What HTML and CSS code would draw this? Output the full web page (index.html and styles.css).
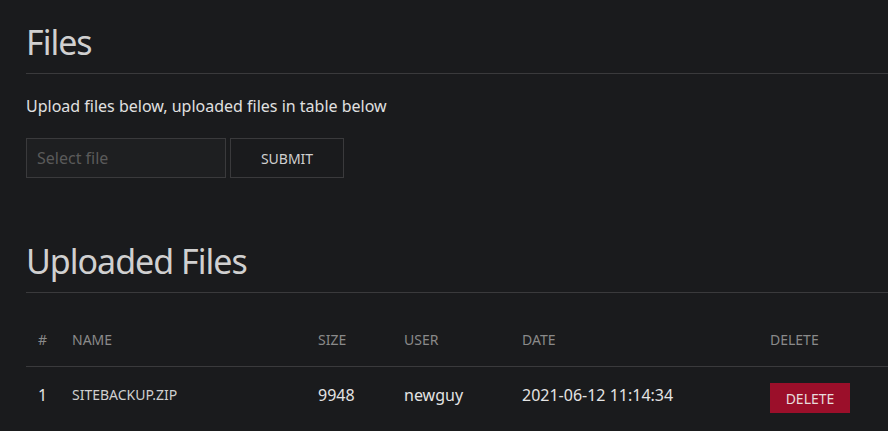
FILE: index.html
```html
<!DOCTYPE html>
<html>
<head>
<meta charset="utf-8">
<link rel="stylesheet" href="styles.css">
</head>
<body>
<main class="page">
  <h1 class="title">Files</h1>
  <p class="lead">Upload files below, uploaded files in table below</p>
  <form class="upload">
    <input class="file-input" type="text" placeholder="Select file">
    <button class="btn-submit" type="button">SUBMIT</button>
  </form>
  <h1 class="title title-second">Uploaded Files</h1>
  <table class="files">
    <colgroup>
      <col class="c-num"><col class="c-name"><col class="c-size"><col class="c-user"><col class="c-date"><col class="c-del">
    </colgroup>
    <thead>
      <tr><th>#</th><th>NAME</th><th>SIZE</th><th>USER</th><th>DATE</th><th>DELETE</th></tr>
    </thead>
    <tbody>
      <tr>
        <td>1</td>
        <td class="fname">SITEBACKUP.ZIP</td>
        <td>9948</td>
        <td>newguy</td>
        <td>2021-06-12 11:14:34</td>
        <td class="del-cell"><button class="btn-delete" type="button">DELETE</button></td>
      </tr>
    </tbody>
  </table>
</main>
</body>
</html>
```
FILE: styles.css
```css
html, body {
  margin: 0;
  padding: 0;
  background: #1a1b1d;
  overflow: hidden;
}
body {
  font-family: "Noto Sans", "Open Sans", sans-serif;
  color: #d8d8d8;
}
.page {
  padding: 21px 0 0 26px;
}
.title {
  margin: 0;
  font-size: 34px;
  letter-spacing: -1px;
  font-weight: 400;
  line-height: 43px;
  color: #d0d0d0;
  padding-bottom: 9px;
  border-bottom: 1px solid #3a3a3c;
}
.title-second {
  margin-top: 62px;
}
.lead {
  margin: 20px 0 0;
  font-size: 16px;
  line-height: 24px;
  color: #e0e0e0;
}
.upload {
  display: flex;
  gap: 4px;
  margin-top: 20px;
}
.file-input {
  box-sizing: border-box;
  width: 200px;
  height: 40px;
  background: #1e1f21;
  border: 1px solid #3a3a3c;
  padding: 0 10px;
  font-family: inherit;
  font-size: 16px;
  color: #ddd;
  outline: none;
}
.file-input::placeholder {
  color: #5a5a5a;
}
.btn-submit {
  box-sizing: border-box;
  width: 114px;
  height: 40px;
  background: #1a1b1d;
  border: 1px solid #3a3a3c;
  font-family: inherit;
  font-size: 14px;
  color: #d0d0d0;
}
.files {
  width: 862px;
  border-collapse: collapse;
  margin-top: 24px;
}
.c-num { width: 34px; }
.c-name { width: 246px; }
.c-size { width: 86px; }
.c-user { width: 118px; }
.c-date { width: 248px; }
.files th {
  text-align: left;
  font-weight: 400;
  font-size: 14px;
  color: #8a8a8a;
  padding: 13px 12px 16px;
  border-bottom: 1px solid #3a3a3c;
  line-height: 20px;
}
.files td {
  text-align: left;
  vertical-align: top;
  font-size: 16px;
  color: #e4e4e4;
  padding: 17px 12px 14px;
  line-height: 22px;
}
.files td.fname {
  font-size: 14px;
  color: #d0d0d0;
}
.files td.del-cell {
  padding-top: 16px;
}
.btn-delete {
  display: block;
  box-sizing: border-box;
  width: 80px;
  height: 30px;
  background: #9b0f2a;
  border: 0;
  font-family: inherit;
  font-size: 14px;
  color: #e8dcdc;
}
```
